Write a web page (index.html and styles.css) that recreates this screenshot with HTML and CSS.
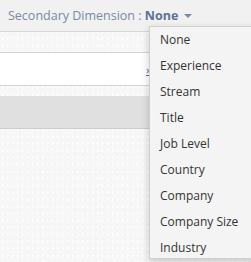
FILE: index.html
```html
<!DOCTYPE html>
<html lang="en">

<head>
  <meta charset="UTF-8">
  <title>Secondary Dimension</title>
  <link rel="stylesheet" href="styles.css">
</head>

<body>
  <div class="bar">
    Secondary Dimension : <b>None</b><span class="caret"></span>
  </div>
  <div class="strip"></div>
  <div class="input-row">
    <a class="more" href="#">»</a>
  </div>
  <div class="strip short"></div>
  <div class="gray-row"></div>

  <ul class="menu">
    <li>None</li>
    <li>Experience</li>
    <li>Stream</li>
    <li>Title</li>
    <li>Job Level</li>
    <li>Country</li>
    <li>Company</li>
    <li>Company Size</li>
    <li>Industry</li>
  </ul>
</body>

</html>
```

FILE: styles.css
```css
body {
  margin: 0;
  overflow: hidden;
  font-family: "Open Sans", "Liberation Sans", sans-serif;
  font-size: 13px;
  background-color: #f7f7f7;
  background-image:
    radial-gradient(rgba(255, 255, 255, 0.7) 1px, transparent 1px),
    radial-gradient(rgba(238, 238, 238, 0.5) 1px, transparent 1px);
  background-size: 5px 7px, 7px 5px;
  background-position: 0 0, 3px 2px;
  height: 262px;
}

.bar {
  height: 31px;
  line-height: 31px;
  padding-left: 8px;
  font-size: 12.5px;
  background: #f1f1f1;
  border-bottom: 1px solid #d8d8d8;
  color: #7a89a6;
}

.bar b {
  color: #5d7196;
  font-weight: 700;
}

.caret {
  display: inline-block;
  margin-left: 6px;
  vertical-align: 2px;
  border-top: 4px solid #7a89a6;
  border-left: 4px solid transparent;
  border-right: 4px solid transparent;
}

.strip {
  height: 20px;
  border-bottom: 1px solid #d3d3d3;
}

.strip.short {
  height: 10px;
  border-bottom: none;
}

.input-row {
  height: 32px;
  background: #fff;
  border-bottom: 1px solid #d3d3d3;
  display: flex;
  align-items: center;
}

.more {
  margin-left: 146px;
  color: #4a6fa5;
  font-size: 11px;
}

.gray-row {
  height: 32px;
  background: #e0e0e0;
  border-bottom: 1px solid #cdcdcd;
}

.menu {
  position: absolute;
  left: 149px;
  top: 26px;
  width: 130px;
  height: 233px;
  box-sizing: border-box;
  margin: 0;
  padding: 0;
  list-style: none;
  overflow: hidden;
  background: #f4f4f4;
  border: 1px solid rgba(0, 0, 0, 0.15);
  box-shadow: 0 3px 8px rgba(0, 0, 0, 0.2);
}

.menu li {
  line-height: 26px;
  padding-left: 10px;
  font-size: 12px;
  color: #333;
  white-space: nowrap;
}
```
